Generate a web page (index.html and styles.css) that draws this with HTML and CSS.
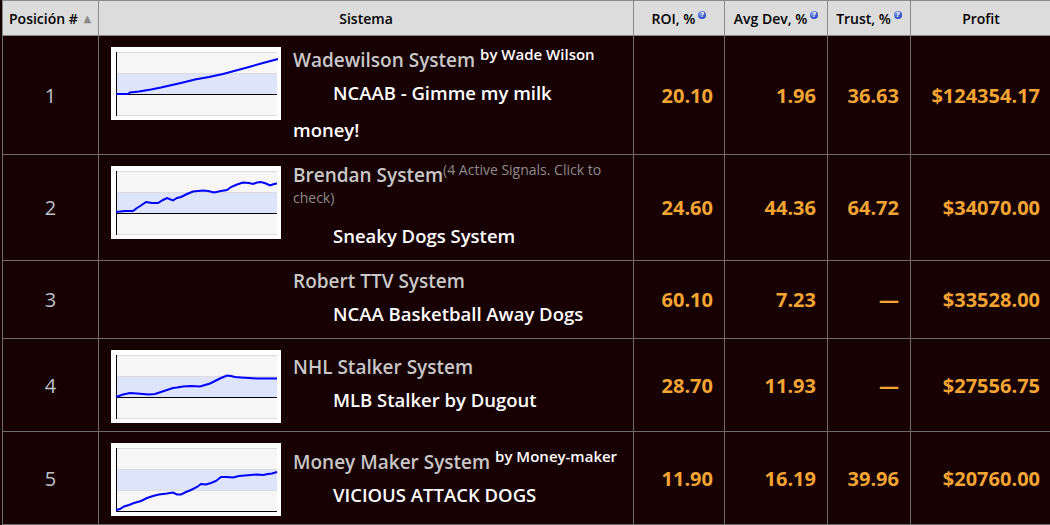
FILE: index.html
```html
<!DOCTYPE html>
<html lang="es">
<head>
<meta charset="utf-8">
<title>Ranking de sistemas</title>
<link rel="stylesheet" href="styles.css">
</head>
<body>
<table class="rank">
  <colgroup>
    <col class="c-pos"><col class="c-sys"><col class="c-roi"><col class="c-dev"><col class="c-trust"><col class="c-profit">
  </colgroup>
  <thead>
    <tr>
      <th class="h-pos">Posición # <span class="sort">&#9650;</span></th>
      <th>Sistema</th>
      <th>ROI, %<span class="help">?</span></th>
      <th>Avg Dev, %<span class="help">?</span></th>
      <th>Trust, %<span class="help">?</span></th>
      <th>Profit</th>
    </tr>
  </thead>
  <tbody>
    <tr>
      <td class="pos">1</td>
      <td class="sys">
        <div class="sys-wrap">
          <div class="chart">
            <svg viewBox="0 0 170 73" width="170" height="73">
              <rect width="170" height="73" fill="#fff"/>
              <rect x="5" y="5" width="161" height="63" fill="#f6f6f6"/>
              <rect x="5" y="26" width="161" height="21" fill="#dde4fb"/>
              <g stroke="#dcdcdc" stroke-width="1"><line x1="5" y1="5.5" x2="166" y2="5.5"/><line x1="5" y1="26.5" x2="166" y2="26.5"/><line x1="5" y1="68.5" x2="166" y2="68.5"/></g>
              <line x1="5" y1="47.5" x2="166" y2="47.5" stroke="#000"/>
              <line x1="5.5" y1="5" x2="5.5" y2="69" stroke="#000"/>
              <polyline fill="none" stroke="#0000ff" stroke-width="2" points="5,47 17,47 19,45.5 28,44.5 40,42.5 50,40.5 61,38 72,35.5 84,32.5 98,30 112,27 125,23.5 138,20 152,16 167,12"/>
            </svg>
          </div>
          <div class="info">
            <div class="name">Wadewilson System <sup class="by">by Wade Wilson</sup></div>
            <div class="desc">NCAAB - Gimme my milk money!</div>
          </div>
        </div>
      </td>
      <td class="num">20.10</td>
      <td class="num">1.96</td>
      <td class="num">36.63</td>
      <td class="num">$124354.17</td>
    </tr>
    <tr>
      <td class="pos">2</td>
      <td class="sys">
        <div class="sys-wrap">
          <div class="chart">
            <svg viewBox="0 0 170 73" width="170" height="73">
              <rect width="170" height="73" fill="#fff"/>
              <rect x="5" y="5" width="161" height="63" fill="#f6f6f6"/>
              <rect x="5" y="26" width="161" height="21" fill="#dde4fb"/>
              <g stroke="#dcdcdc" stroke-width="1"><line x1="5" y1="5.5" x2="166" y2="5.5"/><line x1="5" y1="26.5" x2="166" y2="26.5"/><line x1="5" y1="68.5" x2="166" y2="68.5"/></g>
              <line x1="5" y1="47.5" x2="166" y2="47.5" stroke="#000"/>
              <line x1="5.5" y1="5" x2="5.5" y2="69" stroke="#000"/>
              <polyline fill="none" stroke="#0000ff" stroke-width="2" points="5,46 14,45 22,45 26,42 30,39.5 35,36 41,37 47,37 52,34 56,32 62,34.5 66,32 70,31 76,28 82,25.5 92,24.5 97,25 103,26.5 110,25 116,24 120,21 126,18.5 132,16.5 138,17 142,18 146,16.5 150,16 155,17.5 159,19.5 163,18 166,17.5"/>
            </svg>
          </div>
          <div class="info">
            <div class="name">Brendan System<sup class="signals">(4 Active Signals. Click to check)</sup></div>
            <div class="desc">Sneaky Dogs System</div>
          </div>
        </div>
      </td>
      <td class="num">24.60</td>
      <td class="num">44.36</td>
      <td class="num">64.72</td>
      <td class="num">$34070.00</td>
    </tr>
    <tr>
      <td class="pos">3</td>
      <td class="sys">
        <div class="sys-wrap">
          <div class="chart-empty"></div>
          <div class="info">
            <div class="name">Robert TTV System</div>
            <div class="desc">NCAA Basketball Away Dogs</div>
          </div>
        </div>
      </td>
      <td class="num">60.10</td>
      <td class="num">7.23</td>
      <td class="num">&mdash;</td>
      <td class="num">$33528.00</td>
    </tr>
    <tr>
      <td class="pos">4</td>
      <td class="sys">
        <div class="sys-wrap">
          <div class="chart">
            <svg viewBox="0 0 170 73" width="170" height="73">
              <rect width="170" height="73" fill="#fff"/>
              <rect x="5" y="5" width="161" height="63" fill="#f6f6f6"/>
              <rect x="5" y="26" width="161" height="21" fill="#dde4fb"/>
              <g stroke="#dcdcdc" stroke-width="1"><line x1="5" y1="5.5" x2="166" y2="5.5"/><line x1="5" y1="26.5" x2="166" y2="26.5"/><line x1="5" y1="68.5" x2="166" y2="68.5"/></g>
              <line x1="5" y1="47.5" x2="166" y2="47.5" stroke="#000"/>
              <line x1="5.5" y1="5" x2="5.5" y2="69" stroke="#000"/>
              <polyline fill="none" stroke="#0000ff" stroke-width="2" points="5,47 12,44.5 19,43 26,43.5 32,44 38,44.5 44,44 50,42 56,40 62,38 66,37.5 72,36.5 80,36 89,36.5 94,35 99,33.5 104,31 110,28 116,25.5 120,26 124,27 130,27.5 138,28 146,28.5 156,28.5 166,28.5"/>
            </svg>
          </div>
          <div class="info">
            <div class="name">NHL Stalker System</div>
            <div class="desc">MLB Stalker by Dugout</div>
          </div>
        </div>
      </td>
      <td class="num">28.70</td>
      <td class="num">11.93</td>
      <td class="num">&mdash;</td>
      <td class="num">$27556.75</td>
    </tr>
    <tr>
      <td class="pos">5</td>
      <td class="sys">
        <div class="sys-wrap">
          <div class="chart">
            <svg viewBox="0 0 170 73" width="170" height="73">
              <rect width="170" height="73" fill="#fff"/>
              <rect x="5" y="5" width="161" height="63" fill="#f6f6f6"/>
              <rect x="5" y="26" width="161" height="21" fill="#dde4fb"/>
              <g stroke="#dcdcdc" stroke-width="1"><line x1="5" y1="5.5" x2="166" y2="5.5"/><line x1="5" y1="26.5" x2="166" y2="26.5"/><line x1="5" y1="47.5" x2="166" y2="47.5"/></g>
              <line x1="5" y1="68.5" x2="166" y2="68.5" stroke="#000"/>
              <line x1="5.5" y1="5" x2="5.5" y2="69" stroke="#000"/>
              <polyline fill="none" stroke="#0000ff" stroke-width="2" points="5,67 9,66 13,63.5 18,62 23,60 30,58 36,55 42,53 48,51.5 56,50.5 62,49.5 66,51.5 70,51.5 75,49 80,47 86,44 90,41 95,41.5 100,40 105,38 110,34 116,34 122,34.5 128,33 134,32.5 140,32 146,31.5 152,32 157,31 161,30.5 166,29"/>
            </svg>
          </div>
          <div class="info">
            <div class="name">Money Maker System <sup class="by">by Money-maker</sup></div>
            <div class="desc">VICIOUS ATTACK DOGS</div>
          </div>
        </div>
      </td>
      <td class="num">11.90</td>
      <td class="num">16.19</td>
      <td class="num">39.96</td>
      <td class="num">$20760.00</td>
    </tr>
  </tbody>
</table>
</body>
</html>
```
FILE: styles.css
```css
html, body {
  margin: 0;
  padding: 0;
  background: #170103;
  overflow: hidden;
}

body {
  font-family: "Open Sans", "DejaVu Sans", sans-serif;
}

.rank {
  border-collapse: collapse;
  table-layout: fixed;
  width: 1049px;
  margin-left: 2px;
}

.c-pos { width: 96px; }
.c-sys { width: 535px; }
.c-roi { width: 91px; }
.c-dev { width: 103px; }
.c-trust { width: 83px; }
.c-profit { width: 141px; }

.rank th {
  background: #dcdcdc;
  color: #000;
  font-size: 14px;
  font-weight: 600;
  height: 34px;
  padding: 0 4px;
  border: 1px solid #8a8a8a;
  text-align: center;
  white-space: nowrap;
}

.rank th.h-pos {
  text-align: left;
  padding-left: 6px;
}

.sort {
  color: #8a8a8a;
  font-size: 10px;
  margin-left: 2px;
  position: relative;
  top: -2px;
}

.help {
  display: inline-block;
  width: 8px;
  height: 8px;
  margin-left: 3px;
  border-radius: 50%;
  background: radial-gradient(circle at 35% 30%, #8fa6f0, #2a48c0 70%);
  color: #fff;
  font-size: 7px;
  line-height: 8px;
  text-align: center;
  vertical-align: 7px;
  font-weight: bold;
}

.rank td {
  border: 1px solid #6c6c6c;
  vertical-align: middle;
}

.pos {
  text-align: center;
  color: #bcc3cc;
  font-size: 20px;
}

.sys {
  padding: 6px 12px;
}

.sys-wrap {
  display: flex;
  align-items: center;
  gap: 12px;
}

.chart {
  flex: none;
  width: 170px;
  height: 73px;
  margin: 5px 0 2px;
  align-self: flex-start;
}

.chart svg {
  display: block;
}

.chart-empty {
  flex: none;
  width: 170px;
}

.info {
  flex: 1;
  min-width: 0;
}

.name {
  font-size: 19px;
  font-weight: 600;
  color: #c8c8c8;
  line-height: 28px;
}

.by {
  font-size: 15px;
  font-weight: 600;
  color: #fff;
  line-height: 24px;
}

.signals {
  font-size: 14px;
  font-weight: normal;
  color: #8c8c8c;
  line-height: 0;
}

.desc {
  font-size: 18.5px;
  font-weight: 600;
  color: #fff;
  line-height: 37px;
  text-indent: 40px;
}

.num {
  text-align: right;
  padding-right: 11px;
  font-size: 20px;
  font-weight: 700;
  color: #f2a533;
}
```
